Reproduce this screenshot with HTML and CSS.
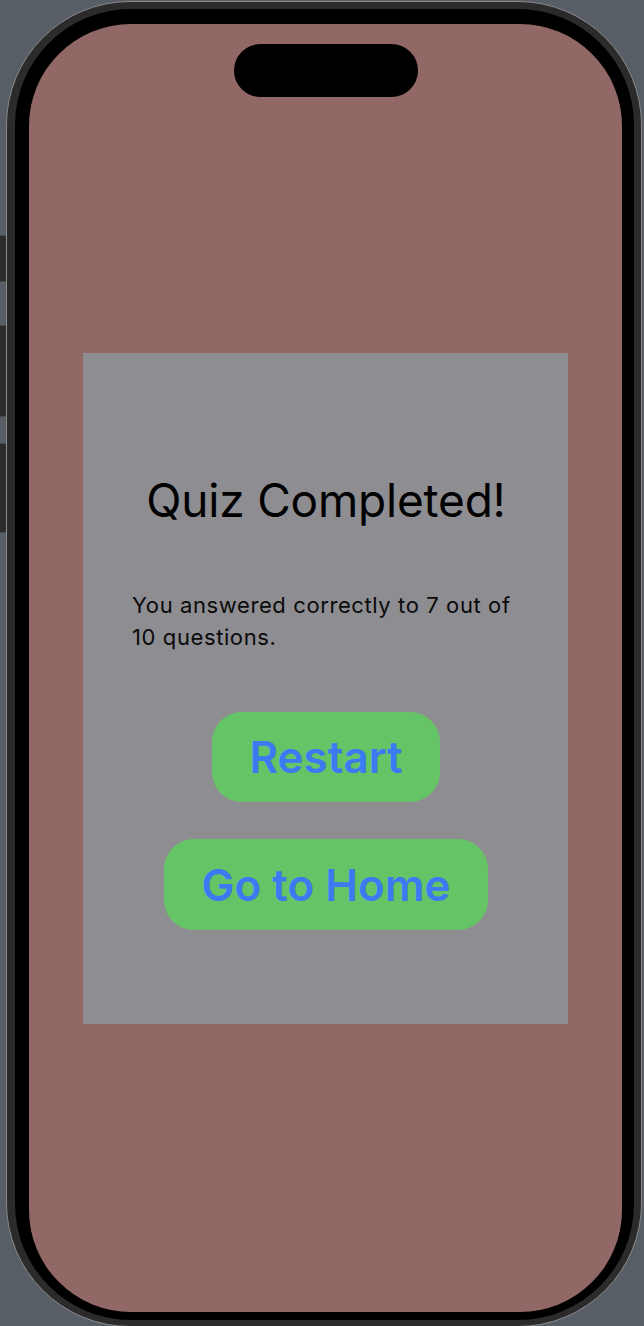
FILE: index.html
```html
<!DOCTYPE html>
<html lang="en">
<head>
<meta charset="utf-8">
<title>Quiz Completed</title>
<link rel="stylesheet" href="styles.css">
</head>
<body>
<div class="desk">
  <div class="side-buttons">
    <div class="side-btn action"></div>
    <div class="side-btn vol-up"></div>
    <div class="side-btn vol-down"></div>
  </div>
  <div class="phone">
    <div class="bezel">
      <div class="screen">
        <div class="island"></div>
        <div class="card">
          <h1 class="title">Quiz Completed!</h1>
          <p class="result">You answered correctly to 7 out of 10 questions.</p>
          <div class="actions">
            <button class="pill restart">Restart</button>
            <button class="pill home">Go to Home</button>
          </div>
        </div>
      </div>
    </div>
  </div>
</div>
</body>
</html>
```

FILE: styles.css
```css
html, body {
  margin: 0;
  padding: 0;
  height: 100%;
  overflow: hidden;
}
body {
  background: #585e66;
  font-family: Inter, "Noto Sans", sans-serif;
}
.desk {
  display: flex;
  align-items: flex-start;
}
.side-buttons {
  width: 6px;
  display: flex;
  flex-direction: column;
  padding-top: 235px;
}
.side-btn {
  width: 6px;
  background: #2c2c2c;
  border-top: 1px solid #4a4a4a;
  border-bottom: 1px solid #4a4a4a;
  box-sizing: border-box;
}
.action { height: 47px; }
.vol-up { height: 92px; margin-top: 43px; }
.vol-down { height: 90px; margin-top: 26px; }

.phone {
  margin-top: 1px;
  width: 636px;
  box-sizing: border-box;
  border: 1px solid #8a8a8a;
  border-radius: 124px;
  background: #2b2b2b;
  padding: 7px 7px 6px 8px;
}
.bezel {
  background: #000;
  border-radius: 116px;
  padding: 15px 12px 8px 14px;
}
.screen {
  height: 1288px;
  background: #926866;
  border-radius: 102px;
  display: flex;
  flex-direction: column;
  align-items: center;
}
.island {
  margin-top: 20px;
  width: 184px;
  height: 53px;
  border-radius: 27px;
  background: #000;
}
.card {
  margin-top: 256px;
  width: 485px;
  height: 671px;
  box-sizing: border-box;
  background: #8e8d92;
  padding: 119px 48px 0 49px;
  display: flex;
  flex-direction: column;
}
.title {
  margin: 0;
  font-weight: 400;
  font-size: 46px;
  line-height: 56px;
  text-align: center;
  color: #000;
  letter-spacing: -0.2px;
}
.result {
  margin: 61px 0 0 0;
  font-size: 22px;
  line-height: 32px;
  color: #0a0a0a;
  letter-spacing: 0.6px;
}
.actions {
  margin-top: 59px;
  display: flex;
  flex-direction: column;
  align-items: center;
  gap: 37px;
}
.pill {
  border: none;
  background: #65c466;
  color: #3a7bf2;
  font-family: Inter, "Noto Sans", sans-serif;
  font-weight: 600;
  font-size: 44px;
  line-height: 44px;
  height: 90px;
  padding: 0 37px;
  border-radius: 30px;
  margin: 0;
}
.home { height: 91px; }
```
